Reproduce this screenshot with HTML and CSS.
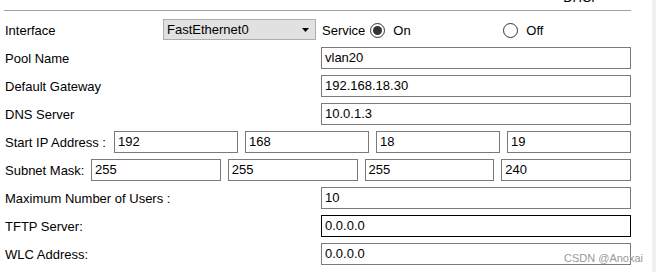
FILE: index.html
```html
<!DOCTYPE html>
<html lang="en">
<head>
<meta charset="utf-8">
<title>DHCP</title>
<link rel="stylesheet" href="styles.css">
</head>
<body>
<div class="screen">
  <div class="panel">
    <div class="title">DHCP</div>
    <div class="rule"></div>
    <div class="form">
      <div class="row">
        <span class="label label-iface">Interface</span>
        <div class="select"><span class="select-text">FastEthernet0</span><svg class="select-arrow" width="7" height="4" viewBox="0 0 7 4"><path d="M0 0H7L3.5 4Z" fill="#000"/></svg></div>
        <span class="service">Service</span>
        <div class="radio-opt radio-on"><span class="radio checked"></span><span>On</span></div>
        <div class="radio-opt"><span class="radio"></span><span>Off</span></div>
      </div>
      <div class="row">
        <span class="label">Pool Name</span>
        <div class="field">vlan20</div>
      </div>
      <div class="row">
        <span class="label">Default Gateway</span>
        <div class="field">192.168.18.30</div>
      </div>
      <div class="row">
        <span class="label">DNS Server</span>
        <div class="field">10.0.1.3</div>
      </div>
      <div class="row">
        <span class="label label-start">Start IP Address :</span>
        <div class="octets">
          <div class="field">192</div>
          <div class="field">168</div>
          <div class="field">18</div>
          <div class="field">19</div>
        </div>
      </div>
      <div class="row">
        <span class="label label-mask">Subnet Mask:</span>
        <div class="octets">
          <div class="field">255</div>
          <div class="field">255</div>
          <div class="field">255</div>
          <div class="field">240</div>
        </div>
      </div>
      <div class="row">
        <span class="label">Maximum Number of Users :</span>
        <div class="field">10</div>
      </div>
      <div class="row">
        <span class="label">TFTP Server:</span>
        <div class="field focused">0.0.0.0</div>
      </div>
      <div class="row">
        <span class="label">WLC Address:</span>
        <div class="field">0.0.0.0</div>
      </div>
    </div>
    <div class="watermark">CSDN @Anoxai</div>
  </div>
  <div class="strip"></div>
</div>
</body>
</html>
```

FILE: styles.css
```css
html, body {
  margin: 0;
  padding: 0;
  background: #ffffff;
}

body {
  font-family: "Liberation Sans", Arial, sans-serif;
  font-size: 13px;
  color: #000;
  overflow: hidden;
}

.screen {
  display: flex;
  width: 656px;
  height: 272px;
  overflow: hidden;
}

.panel {
  position: relative;
  width: 652px;
  flex: none;
  background: #fff;
}

.strip {
  flex: 1;
  background: #f0f0f0;
}

.title {
  height: 14px;
  line-height: 14px;
  margin-top: -9px;
  width: 600px;
  text-align: right;
  font-size: 13px;
}

.rule {
  margin: 5px 0 0 4px;
  width: 627px;
  border-top: 1px solid #a0a0a0;
}

.form {
  margin: 8px 0 0 5px;
  width: 626px;
  display: flex;
  flex-direction: column;
  gap: 6px;
}

.row {
  display: flex;
  align-items: center;
  height: 22px;
}

.label {
  flex: 1;
  white-space: nowrap;
}

.label-iface {
  flex: none;
  width: 158px;
}

.label-start {
  flex: none;
  width: 109px;
}

.label-mask {
  flex: none;
  width: 86px;
}

.select {
  box-sizing: border-box;
  width: 153px;
  height: 21px;
  align-self: flex-start;
  background: #e1e1e1;
  border: 1px solid #adadad;
  display: flex;
  align-items: center;
  padding: 0 6px 0 3px;
}

.select-text {
  flex: 1;
}

.select-arrow {
  display: block;
}

.service {
  margin-left: 6px;
}

.radio-opt {
  display: flex;
  align-items: center;
  gap: 8px;
}

.radio-on {
  margin-left: 5px;
  width: 133px;
}

.radio {
  box-sizing: border-box;
  width: 15px;
  height: 15px;
  border: 1px solid #333;
  border-radius: 50%;
  background: #fff;
  display: flex;
  align-items: center;
  justify-content: center;
}

.radio.checked::after {
  content: "";
  width: 9px;
  height: 9px;
  border-radius: 50%;
  background: #333;
}

.field {
  box-sizing: border-box;
  width: 310px;
  height: 22px;
  border: 1px solid #7a7a7a;
  padding: 0 3px;
  line-height: 20px;
  background: #fff;
  white-space: nowrap;
  overflow: hidden;
}

.field.focused {
  border-color: #000;
}

.octets {
  flex: 1;
  display: flex;
  gap: 7px;
}

.octets .field {
  flex: 1;
  width: auto;
  min-width: 0;
}

.watermark {
  position: absolute;
  left: 564px;
  top: 252px;
  font-size: 11px;
  color: #9a9a9a;
  white-space: nowrap;
}
```
